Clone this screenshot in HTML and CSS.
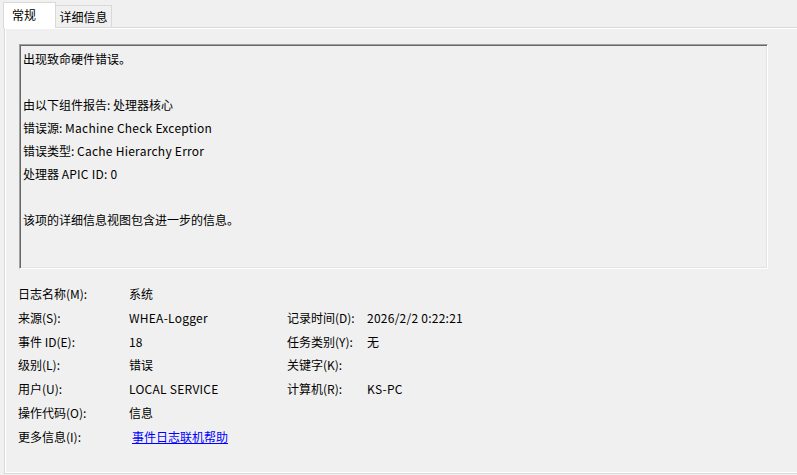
FILE: index.html
```html
<!DOCTYPE html>
<html lang="zh-CN">
<head>
<meta charset="utf-8">
<title>事件属性</title>
<link rel="stylesheet" href="styles.css">
</head>
<body>
<div class="tabs">
  <div class="tab active">常规</div>
  <div class="tab">详细信息</div>
</div>
<div class="panel">
  <div class="desc">
    <div class="line">出现致命硬件错误。</div>
    <div class="line"></div>
    <div class="line">由以下组件报告: 处理器核心</div>
    <div class="line">错误源: <span class="lat">Machine Check Exception</span></div>
    <div class="line">错误类型: <span class="lat">Cache Hierarchy Error</span></div>
    <div class="line">处理器 <span class="lat">APIC ID: 0</span></div>
    <div class="line"></div>
    <div class="line">该项的详细信息视图包含进一步的信息。</div>
  </div>
  <div class="fields">
    <div class="lbl">日志名称(M):</div><div class="val">系统</div><div class="lbl2"></div><div class="val2"></div>
    <div class="lbl">来源(S):</div><div class="val lat">WHEA-Logger</div><div class="lbl2">记录时间(D):</div><div class="val2 lat">2026/2/2 0:22:21</div>
    <div class="lbl">事件 ID(E):</div><div class="val">18</div><div class="lbl2">任务类别(Y):</div><div class="val2">无</div>
    <div class="lbl">级别(L):</div><div class="val">错误</div><div class="lbl2">关键字(K):</div><div class="val2"></div>
    <div class="lbl">用户(U):</div><div class="val lat">LOCAL SERVICE</div><div class="lbl2">计算机(R):</div><div class="val2 lat">KS-PC</div>
    <div class="lbl">操作代码(O):</div><div class="val">信息</div><div class="lbl2"></div><div class="val2"></div>
    <div class="lbl">更多信息(I):</div><div class="val"><a class="link" href="#">事件日志联机帮助</a></div><div class="lbl2"></div><div class="val2"></div>
  </div>
</div>
</body>
</html>
```
FILE: styles.css
```css
html, body {
  margin: 0;
  padding: 0;
  background: #f0f0f0;
  width: 797px;
  height: 475px;
  overflow: hidden;
  font-family: "Noto Sans CJK SC", "Noto Sans", sans-serif;
  font-size: 12px;
  color: #000;
}
.tabs {
  display: flex;
  align-items: flex-end;
  height: 27px;
  padding-left: 3px;
  position: relative;
  z-index: 1;
}
.tab {
  box-sizing: border-box;
  border: 1px solid #d9d9d9;
  border-bottom: none;
  background: #f0f0f0;
  height: 22px;
  line-height: 21px;
  width: 56px;
  text-align: center;
  white-space: nowrap;
  flex: none;
}
.tab.active {
  background: #ffffff;
  height: 26px;
  line-height: 24px;
  width: 53px;
  margin-bottom: -1px;
  text-align: left;
  padding-left: 8px;
}
.tab + .tab {
  border-left: none;
}
.panel {
  box-sizing: border-box;
  margin-left: 4px;
  width: 800px;
  height: 447px;
  border: 1px solid #d9d9d9;
  box-shadow: inset 1px 1px 0 #ffffff, inset 0 -1px 0 #ffffff;
  padding: 16px 0 0 14px;
}
.desc {
  box-sizing: border-box;
  width: 749px;
  height: 225px;
  border-top: 1px solid #a0a0a0;
  border-left: 1px solid #a0a0a0;
  border-right: 1px solid #ffffff;
  border-bottom: 1px solid #ffffff;
  box-shadow: inset 1px 1px 0 #696969, inset -1px -1px 0 #e3e3e3;
  background: #f0f0f0;
  padding: 1.5px 0 0 3px;
}
.line {
  height: 23px;
  line-height: 23px;
  white-space: nowrap;
}
.lat {
  letter-spacing: 0.25px;
}
.fields {
  display: grid;
  grid-template-columns: 111px 158px 80px 1fr;
  grid-auto-rows: 23.8px;
  margin-top: 13px;
  margin-left: -1px;
  line-height: 23.8px;
  white-space: nowrap;
}
.link {
  color: #0000ff;
  text-decoration: underline;
  margin-left: 3px;
}
```
